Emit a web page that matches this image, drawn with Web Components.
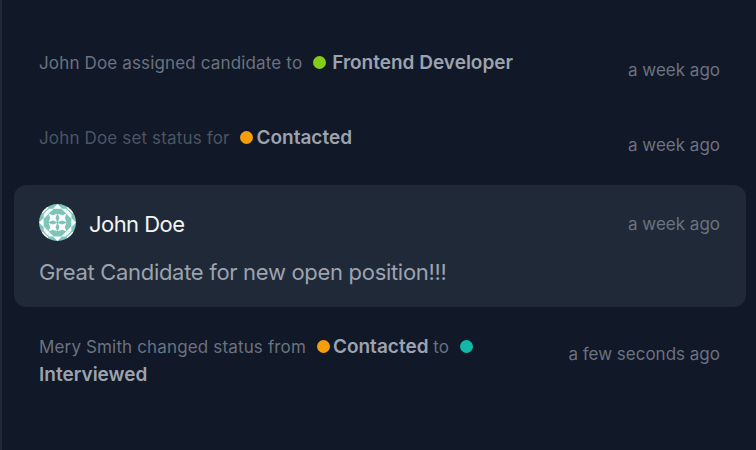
<!DOCTYPE html>
<html lang="en">
<head>
<meta charset="utf-8">
<title>Candidate activity</title>
<style>
    body {
        margin: 0;
        background: #111827;
        font-family: Inter, "Liberation Sans", sans-serif;
    }
</style>
</head>
<body>

<activity-feed>
    <activity-item time="a week ago">John Doe assigned candidate to <status-label color="#84cc16" spaced>Frontend Developer</status-label></activity-item>
    <activity-item time="a week ago" dimmed>John Doe set status for <status-label color="#f59e0b">Contacted</status-label></activity-item>
    <activity-comment author="John Doe" time="a week ago">Great Candidate for new open position!!!</activity-comment>
    <activity-item time="a few seconds ago">Mery Smith changed status from <status-label color="#f59e0b">Contacted</status-label> to <status-label color="#14b8a6">Interviewed</status-label></activity-item>
</activity-feed>

<script>
class ActivityFeed extends HTMLElement {

    constructor() {
        super();
        this.shadowDOM = this.attachShadow({mode: "open"});
    }

    connectedCallback() {
        this.shadowDOM.innerHTML = `
        <style>
        :host {
            display: flex;
            flex-direction: column;
            box-sizing: border-box;
            height: 450px;
            padding: 30px 10px 0 12px;
            border-left: 2px solid #1f2937;
            overflow: hidden;
        }
        </style>
        <slot></slot>
        `;
    }
}

class TimeStamp extends HTMLElement {

    constructor() {
        super();
        this.shadowDOM = this.attachShadow({mode: "open"});
    }

    connectedCallback() {
        this.shadowDOM.innerHTML = `
        <style>
        :host {
            display: block;
            flex: none;
            color: #6b7280;
            font-size: 17px;
            line-height: 25px;
            letter-spacing: 0;
            white-space: nowrap;
        }
        </style>
        <slot></slot>
        `;
    }
}

class StatusLabel extends HTMLElement {

    constructor() {
        super();
        this.shadowDOM = this.attachShadow({mode: "open"});
    }

    connectedCallback() {
        this.shadowDOM.innerHTML = `
        <style>
        :host {
            display: inline;
            color: #9ca3af;
            font-size: 19px;
            font-weight: 600;
            letter-spacing: 0;
        }

        .dot {
            display: inline-block;
            width: 13px;
            height: 13px;
            margin: 0 3px 0 6px;
            border-radius: 50%;
            background: ${this.getAttribute("color")};
            vertical-align: 0;
        }

        :host([spaced]) .dot {
            margin-right: 6px;
        }
        </style>
        <span class="dot"></span><slot></slot>
        `;
    }
}

class ActivityItem extends HTMLElement {

    constructor() {
        super();
        this.shadowDOM = this.attachShadow({mode: "open"});
    }

    connectedCallback() {
        this.shadowDOM.innerHTML = `
        <style>
        :host {
            display: flex;
            justify-content: space-between;
            align-items: flex-start;
            padding: 19px 26px 22px 25px;
        }

        .text {
            max-width: 500px;
            color: #6b7280;
            font-size: 17px;
            line-height: 28px;
            letter-spacing: 0.15px;
        }

        :host([dimmed]) .text {
            color: #4b5563;
        }

        time-stamp {
            margin-top: 9px;
        }
        </style>
        <div class="text"><slot></slot></div>
        <time-stamp>${this.getAttribute("time")}</time-stamp>
        `;
    }
}

class IdentIcon extends HTMLElement {

    constructor() {
        super();
        this.shadowDOM = this.attachShadow({mode: "open"});
    }

    connectedCallback() {
        // one quarter of the pattern, turned around the centre
        this.shadowDOM.innerHTML = `
        <style>
        :host {
            display: block;
            width: 37px;
            height: 37px;
            border-radius: 50%;
            overflow: hidden;
        }

        svg {
            display: block;
        }
        </style>
        <svg width="37" height="37" viewBox="0 0 48 48">
            <defs>
                <g id="quarter">
                    <path d="M0 0H12V12H0z"/>
                    <path d="M12 6H19L12 13z"/>
                    <path d="M6 12V19L13 12z"/>
                    <path d="M12.5 12.5L18 14.5L23.5 12.5L21.5 18L23.5 23.5L18 21.5L12.5 23.5L14.5 18z"/>
                </g>
            </defs>
            <path fill="#7fc4b8" d="M0 0H48V48H0z"/>
            <path fill="#fff" d="M24 0L30 6H18zM24 48L18 42H30zM0 24L6 18V30zM48 24L42 30V18z"/>
            <g fill="#fff">
                <use href="#quarter"/>
                <use href="#quarter" transform="rotate(90 24 24)"/>
                <use href="#quarter" transform="rotate(180 24 24)"/>
                <use href="#quarter" transform="rotate(270 24 24)"/>
            </g>
            <path fill="none" stroke="#7fc4b8" stroke-width="1.6" d="M5 13L13 5M35 5L43 13M43 35L35 43M13 43L5 35"/>
        </svg>
        `;
    }
}

class ActivityComment extends HTMLElement {

    constructor() {
        super();
        this.shadowDOM = this.attachShadow({mode: "open"});
    }

    connectedCallback() {
        this.shadowDOM.innerHTML = `
        <style>
        :host {
            display: block;
            box-sizing: border-box;
            height: 122px;
            margin: 5px 0 7px;
            padding: 18px 26px 0 25px;
            border-radius: 12px;
            background: #1f2937;
        }

        .header {
            display: flex;
            align-items: center;
            height: 38px;
        }

        .author {
            margin: 3px auto 0 13px;
            color: #f3f4f6;
            font-size: 22px;
            line-height: 30px;
            letter-spacing: -0.55px;
        }

        time-stamp {
            margin-top: 5px;
        }

        .message {
            margin-top: 16px;
            color: #9ca3af;
            font-size: 22px;
            line-height: 30px;
            letter-spacing: -0.31px;
        }
        </style>
        <div class="header">
            <ident-icon></ident-icon>
            <div class="author">${this.getAttribute("author")}</div>
            <time-stamp>${this.getAttribute("time")}</time-stamp>
        </div>
        <div class="message"><slot></slot></div>
        `;
    }
}

customElements.define("activity-feed", ActivityFeed);
customElements.define("time-stamp", TimeStamp);
customElements.define("status-label", StatusLabel);
customElements.define("activity-item", ActivityItem);
customElements.define("ident-icon", IdentIcon);
customElements.define("activity-comment", ActivityComment);
</script>
</body>
</html>
